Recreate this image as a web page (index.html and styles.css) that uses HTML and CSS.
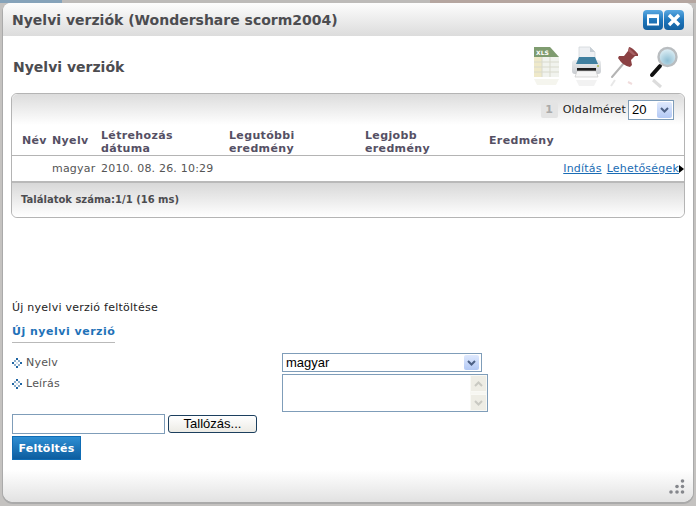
FILE: index.html
```html
<!DOCTYPE html>
<html lang="hu">
<head>
  <meta charset="UTF-8">
  <title>Nyelvi verziók</title>
  <link rel="stylesheet" href="styles.css">
</head>
<body>
  <div class="dialog">
    <!-- Címsor -->
    <div class="titlebar">
      <span class="title">Nyelvi verziók (Wondershare scorm2004)</span>
      <div class="win-buttons">
        <span class="win-btn">
          <svg width="14" height="14" viewBox="0 0 14 14"><rect x="2" y="2.5" width="10" height="9" fill="none" stroke="#fff" stroke-width="2"/><rect x="1" y="1.5" width="12" height="3.5" fill="#fff"/></svg>
        </span>
        <span class="win-btn">
          <svg width="14" height="14" viewBox="0 0 14 14"><path d="M2 2 L12 12 M12 2 L2 12" stroke="#fff" stroke-width="3.4"/></svg>
        </span>
      </div>
    </div>

    <div class="content">
      <div class="page-head">
        <h2>Nyelvi verziók</h2>
        <div class="tools">
          <svg class="ico-xls" width="26" height="44" viewBox="0 0 26 44">
            <path d="M1 1 H17 L26 11 V31 H1 Z" fill="#f1f3ee"/>
            <rect x="1" y="11" width="8" height="20" fill="#efe9c9"/>
            <path d="M1 1 H17 L26 11 H1 Z" fill="#7f9c70"/>
            <path d="M1 16 H26 M1 21 H26 M1 26 H26 M9 11 V31 M17 11 V31" stroke="#d9dacd" stroke-width="1"/>
            <text x="3" y="9" class="xls">XLS</text>
            <path d="M1 33 H26 L23 39 H4 Z" fill="#f5f5ee"/>
          </svg>
          <svg width="30" height="44" viewBox="0 0 30 44">
            <defs>
              <linearGradient id="printer-body" x1="0" y1="0" x2="0" y2="1"><stop offset="0" stop-color="#eceef0"/><stop offset="1" stop-color="#c9ccd0"/></linearGradient>
            </defs>
            <path d="M8 1 H19 L24 6 V16 H8 Z" fill="#eef0f3" stroke="#cdd2d7" stroke-width=".7"/>
            <path d="M19 1 L24 6 H19 Z" fill="#c6ced5"/>
            <rect x="1" y="14" width="29" height="14" rx="3" fill="url(#printer-body)"/>
            <path d="M8 11 H24 L27 18 H5 Z" fill="#3f7f9f"/>
            <rect x="6" y="22" width="19" height="3" fill="#1e1e1e"/>
            <path d="M6 25 H25 L27 31 H4 Z" fill="#f6f6f6" stroke="#c8c8c8" stroke-width=".7"/>
            <circle cx="27" cy="20" r="1" fill="#a9b84a"/>
            <path d="M5 34 H26 L23 40 H8 Z" fill="#f2f2f2"/>
          </svg>
          <svg width="30" height="44" viewBox="0 0 30 44">
            <path d="M14 17 L2 31" stroke="#b4b4b4" stroke-width="2" stroke-linecap="round"/>
            <path d="M19 1 Q22 1 28 8 L28 10 L25 10 L21 14 L22 19 L20 21 Q13 20 8 12 L9 10 L14 10 L18 5 Z" fill="#8b4143"/>
            <path d="M19 2 L26 9 L23 9 L18 5 Z" fill="#a86264"/>
            <path d="M5 34 L1 40" stroke="#e8e8e8" stroke-width="2"/>
            <path d="M18 36 L22 38" stroke="#f0dcdc" stroke-width="2"/>
          </svg>
          <svg width="30" height="44" viewBox="0 0 30 44">
            <defs>
              <radialGradient id="lens" cx=".5" cy=".7" r=".7"><stop offset="0" stop-color="#8fbfd4"/><stop offset="1" stop-color="#e6f3f8"/></radialGradient>
            </defs>
            <path d="M11 20 L3 29" stroke="#111" stroke-width="4" stroke-linecap="round"/>
            <circle cx="18.5" cy="11" r="9" fill="url(#lens)" stroke="#b9bdc0" stroke-width="2.4"/>
            <path d="M4 34 L12 41" stroke="#dcdcdc" stroke-width="3"/>
          </svg>
        </div>
      </div>

      <div class="grid-box">
        <div class="pager">
          <span class="page-num">1</span>
          <span class="pager-label">Oldalméret</span>
          <span class="fake-select page-size">
            <span>20</span>
            <span class="arrow"><svg width="9" height="6" viewBox="0 0 9 6"><path d="M1 1 L4.5 4.5 L8 1" fill="none" stroke="#4d6185" stroke-width="2"/></svg></span>
          </span>
        </div>
        <div class="grid-head">
          <span class="col-nev">Név</span>
          <span class="col-nyelv">Nyelv</span>
          <span class="col-date">Létrehozás<br>dátuma</span>
          <span class="col-last">Legutóbbi<br>eredmény</span>
          <span class="col-best">Legjobb<br>eredmény</span>
          <span class="col-res">Eredmény</span>
        </div>
        <div class="grid-row">
          <span class="col-nev"></span>
          <span class="col-nyelv">magyar</span>
          <span class="col-date nowrap">2010. 08. 26. 10:29</span>
          <span class="row-links">
            <a href="#">Indítás</a>
            <a href="#" class="more">Lehetőségek</a>
          </span>
        </div>
        <div class="grid-foot">Találatok száma:1/1 (16 ms)</div>
      </div>

      <div class="upload">
        <p class="upload-title">Új nyelvi verzió feltöltése</p>
        <h3 class="tab-title">Új nyelvi verzió</h3>
        <div class="form-grid">
          <div class="labels">
            <div class="field-label">
              <svg class="bullet" width="10" height="10" viewBox="0 0 10 10" shape-rendering="crispEdges"><path d="M4 0h2v2h-2z M0 4h2v2h-2z M8 4h2v2h-2z M4 8h2v2h-2z" fill="#1f65a3"/><path d="M2 2h2v2h-2z M6 2h2v2h-2z M2 6h2v2h-2z M6 6h2v2h-2z" fill="#8fb0cc"/><path d="M4 4h2v2h-2z" fill="#d5e2ec"/></svg>
              Nyelv
            </div>
            <div class="field-label">
              <svg class="bullet" width="10" height="10" viewBox="0 0 10 10" shape-rendering="crispEdges"><path d="M4 0h2v2h-2z M0 4h2v2h-2z M8 4h2v2h-2z M4 8h2v2h-2z" fill="#1f65a3"/><path d="M2 2h2v2h-2z M6 2h2v2h-2z M2 6h2v2h-2z M6 6h2v2h-2z" fill="#8fb0cc"/><path d="M4 4h2v2h-2z" fill="#d5e2ec"/></svg>
              Leírás
            </div>
          </div>
          <div class="inputs">
            <span class="fake-select lang">
              <span>magyar</span>
              <span class="arrow"><svg width="9" height="6" viewBox="0 0 9 6"><path d="M1 1 L4.5 4.5 L8 1" fill="none" stroke="#4d6185" stroke-width="2"/></svg></span>
            </span>
            <div class="fake-textarea">
              <div class="scrollbar">
                <span class="sb-btn"><svg width="9" height="6" viewBox="0 0 9 6"><path d="M1 5 L4.5 1.5 L8 5" fill="none" stroke="#c9c9c2" stroke-width="2"/></svg></span>
                <span class="sb-btn"><svg width="9" height="6" viewBox="0 0 9 6"><path d="M1 1 L4.5 4.5 L8 1" fill="none" stroke="#c9c9c2" stroke-width="2"/></svg></span>
              </div>
            </div>
          </div>
        </div>
        <div class="file-row">
          <span class="file-input"></span>
          <span class="browse-btn">Tallózás...</span>
        </div>
        <button class="submit-btn">Feltöltés</button>
      </div>
    </div>

    <div class="dialog-foot">
      <svg width="16" height="15" viewBox="0 0 16 15" fill="#85878c">
        <circle cx="13.5" cy="2" r="1.8"/>
        <circle cx="8" cy="7.5" r="1.8"/><circle cx="13.5" cy="7.5" r="1.8"/>
        <circle cx="2" cy="13" r="1.8"/><circle cx="8" cy="13" r="1.8"/><circle cx="13.5" cy="13" r="1.8"/>
      </svg>
    </div>
  </div>
</body>
</html>
```

FILE: styles.css
```css
html, body {
  margin: 0;
  padding: 0;
  height: 100%;
  overflow: hidden;
}

/* a párbeszédablak mögötti, elmosódott oldal sávjai */
body {
  background: linear-gradient(90deg, #86a3ba 62px, #bdbbb9 62px, #bdbbb9 430px, #b5a6a0 430px) top / 100% 3px no-repeat #c4c2c0;
  font-family: "DejaVu Sans", Verdana, sans-serif;
  font-size: 11px;
  color: #333;
  padding: 3px;
  box-sizing: border-box;
}

.dialog {
  width: 690px;
  height: 499px;
  background: #fff;
  border-radius: 8px 8px 10px 10px;
  box-shadow: 0 1px 0 1px #aaa;
  display: flex;
  flex-direction: column;
  overflow: hidden;
}

.titlebar {
  height: 33px;
  flex: none;
  display: flex;
  align-items: center;
  justify-content: space-between;
  padding: 0 9px;
  background: linear-gradient(#fdfdfd, #dcdcdc);
}

.title {
  font-size: 14px;
  font-weight: bold;
  color: #4c4c50;
}

.win-buttons {
  display: flex;
  gap: 1px;
}

.win-btn {
  width: 20px;
  height: 20px;
  display: flex;
  align-items: center;
  justify-content: center;
  background: linear-gradient(#5aa9e2, #1f76bb 50%, #125f9f);
  border-radius: 4px;
}

.content {
  flex: 1;
  padding: 0 8px;
}

.page-head {
  height: 57px;
  display: flex;
  justify-content: space-between;
  align-items: flex-start;
}

.page-head h2 {
  margin: 23px 0 0 2px;
  font-size: 14px;
  color: #4c4c50;
}

.tools {
  display: flex;
  gap: 9px;
  margin: 10px 6px 0 0;
}

.ico-xls {
  margin-right: 3px;
}

.xls {
  font-family: "DejaVu Sans", sans-serif;
  font-size: 6px;
  font-weight: bold;
  fill: #fff;
}

.grid-box {
  width: 674px;
  border: 1px solid #b4b4b4;
  border-radius: 6px;
  box-sizing: border-box;
}

.pager {
  height: 31px;
  display: flex;
  align-items: center;
  justify-content: flex-end;
  padding: 0 10px 0 0;
  background: linear-gradient(#dcdcdc, #fff);
  border-radius: 6px 6px 0 0;
}

.page-num {
  width: 17px;
  height: 16px;
  line-height: 16px;
  text-align: center;
  background: #e4e4e4;
  color: #aaa;
  font-weight: bold;
  border-radius: 2px;
  margin-right: 5px;
}

.pager-label {
  color: #222;
  letter-spacing: .2px;
  margin-right: 2px;
}

.fake-select {
  display: inline-flex;
  align-items: center;
  justify-content: space-between;
  box-sizing: border-box;
  border: 1px solid #7f9db9;
  background: #fff;
  font-family: "Liberation Sans", Arial, sans-serif;
  font-size: 13px;
  color: #000;
}

.page-size {
  width: 46px;
  height: 20px;
  padding: 0 1px 0 3px;
}

.arrow {
  width: 15px;
  height: 16px;
  display: flex;
  align-items: center;
  justify-content: center;
  background: linear-gradient(#dfe9fd, #b3c9f5);
  border-radius: 2px;
}

.grid-head, .grid-row {
  display: flex;
}

.grid-head {
  height: 30px;
  align-items: flex-end;
  font-weight: bold;
  color: #555064;
  line-height: 13px;
  letter-spacing: .35px;
  border-bottom: 1px solid #b4b4b4;
}

.col-nev { width: 30px; margin-left: 10px; }
.col-nyelv { width: 49px; }
.col-date { width: 128px; }
.col-last { width: 136px; }
.col-best { width: 124px; }
.col-res { width: 100px; }

.grid-head .col-nev, .grid-head .col-nyelv, .grid-head .col-res {
  align-self: center;
}

.grid-row {
  height: 25px;
  align-items: center;
  color: #555;
  letter-spacing: .2px;
  border-bottom: 2px solid #b9b9b9;
}

.nowrap { white-space: nowrap; }

.row-links {
  margin-left: auto;
  margin-right: 5px;
  display: flex;
  gap: 5px;
}

.row-links a {
  color: #1a6cb4;
}

.more {
  position: relative;
}

/* fekete nyíl a link végén */
.more::after {
  content: "";
  position: absolute;
  right: -5px;
  top: 3px;
  border-left: 5px solid #000;
  border-top: 4px solid transparent;
  border-bottom: 4px solid transparent;
}

.grid-foot {
  height: 34px;
  line-height: 34px;
  padding-left: 9px;
  font-size: 10px;
  font-weight: bold;
  color: #4c4c50;
  background: linear-gradient(#d8d8d8, #fff);
  border-radius: 0 0 6px 6px;
}

.upload {
  padding-top: 83px;
  padding-left: 1px;
}

.upload-title {
  margin: 0;
  color: #222;
  line-height: 14px;
  letter-spacing: .25px;
}

.tab-title {
  display: inline-block;
  margin: 10px 0 0;
  padding-bottom: 3px;
  font-size: 11px;
  line-height: 14px;
  letter-spacing: .5px;
  color: #1f72b8;
  border-bottom: 1px solid #b9b9b9;
}

.form-grid {
  display: flex;
  margin-top: 10px;
}

.labels {
  width: 270px;
  margin-top: -1px;
}

.field-label {
  display: flex;
  align-items: center;
  gap: 4px;
  height: 21px;
  color: #555;
  letter-spacing: .2px;
}

.inputs {
  display: flex;
  flex-direction: column;
  gap: 2px;
}

.lang {
  width: 200px;
  height: 19px;
  padding: 0 2px 0 3px;
}

.lang .arrow {
  height: 15px;
}

.fake-textarea {
  width: 206px;
  height: 38px;
  box-sizing: border-box;
  border: 1px solid #7f9db9;
  display: flex;
  justify-content: flex-end;
}

.scrollbar {
  width: 17px;
  display: flex;
  flex-direction: column;
  justify-content: space-between;
  background: #f7f7f2;
}

.sb-btn {
  height: 17px;
  display: flex;
  align-items: center;
  justify-content: center;
  background: #eeede5;
  border: 1px solid #f9f9f5;
  box-sizing: border-box;
}

.file-row {
  display: flex;
  gap: 3px;
  margin-top: 2px;
}

.file-input {
  width: 153px;
  height: 20px;
  box-sizing: border-box;
  border: 1px solid #7f9db9;
}

.browse-btn {
  width: 89px;
  height: 18px;
  box-sizing: border-box;
  margin-top: 1px;
  border: 1px solid #1c3f5e;
  border-radius: 3px;
  background: linear-gradient(#fff, #ecebe5);
  font-family: "Liberation Sans", Arial, sans-serif;
  font-size: 13px;
  line-height: 16px;
  text-align: center;
  color: #000;
}

.submit-btn {
  display: block;
  width: 69px;
  height: 24px;
  margin: 2px 0 0;
  padding: 0;
  border: 1px solid #0f6cb4;
  background: linear-gradient(#2e8ed3, #0d5d9f);
  color: #fff;
  font-family: "DejaVu Sans", sans-serif;
  font-size: 11px;
  font-weight: bold;
  letter-spacing: .2px;
}

.dialog-foot {
  height: 32px;
  flex: none;
  display: flex;
  justify-content: flex-end;
  align-items: flex-end;
  padding: 0 8px 8px 0;
  box-sizing: border-box;
  background: linear-gradient(#fff, #e2e2e2);
}
```
